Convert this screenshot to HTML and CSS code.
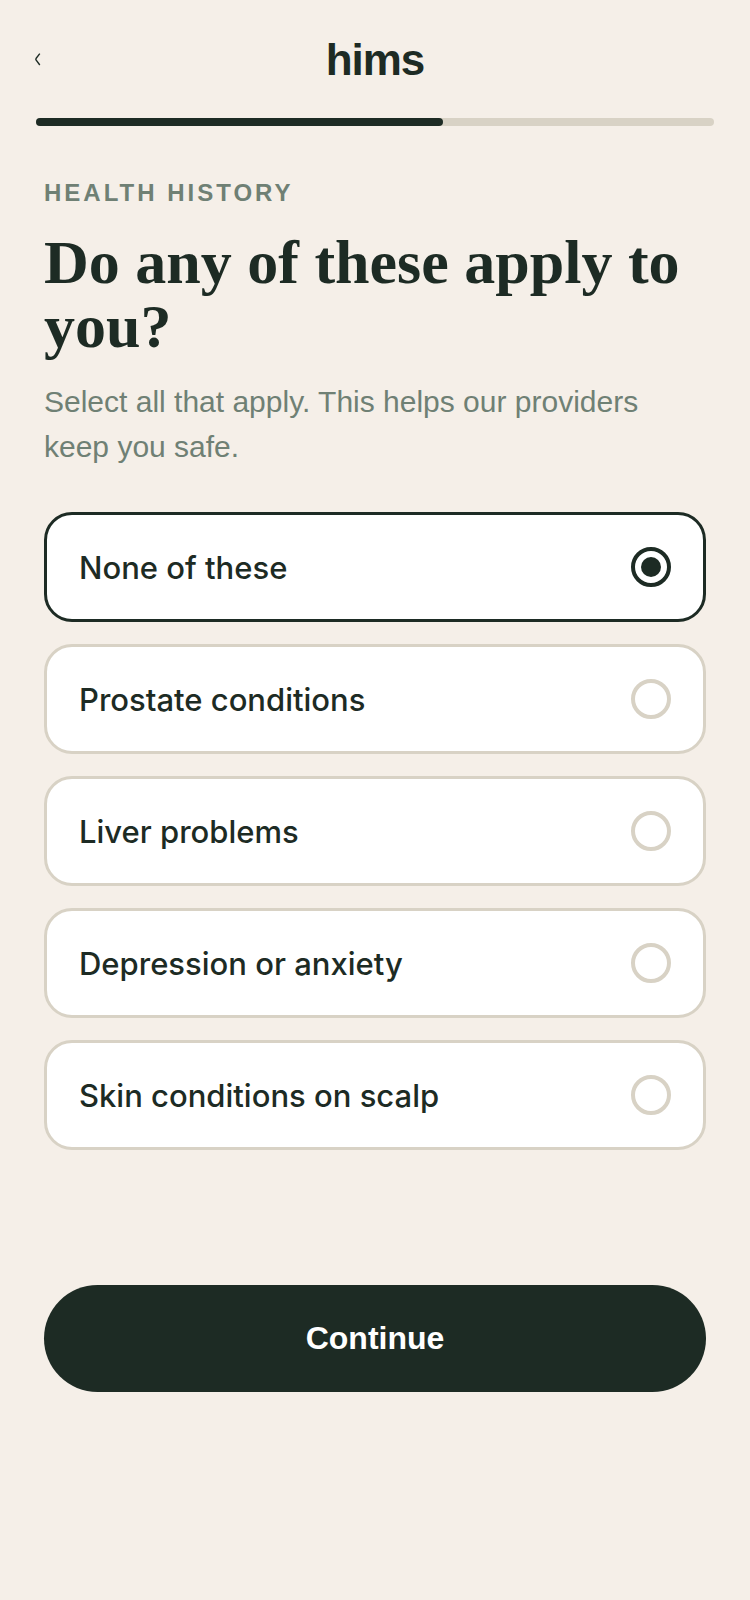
FILE: index.html
```html
<!DOCTYPE html>
<html lang="en">
<head>
    <meta charset="UTF-8">
    <meta name="viewport" content="width=device-width, initial-scale=1.0">
    <title>Health history</title>
    <link rel="stylesheet" href="styles.css">
</head>
<body>
    <header class="header">
        <button class="back" type="button" aria-label="Back">
            <svg viewBox="0 0 8 16" width="8" height="16" aria-hidden="true">
                <path d="M5.8 1.6L2.2 6.2Q1.4 7.2 2.2 8.2L5.8 13" fill="none" stroke="currentColor" stroke-width="1.4"/>
            </svg>
        </button>
        <div class="logo">hims</div>
    </header>
    <div class="progress">
        <div class="progress-fill" style="width: 60%"></div>
    </div>

    <main class="content">
        <p class="eyebrow">HEALTH HISTORY</p>
        <h1 class="title">Do any of these apply to you?</h1>
        <p class="subtitle">Select all that apply. This helps our providers keep you safe.</p>

        <form class="form">
            <div class="options">
                <label class="option">
                    <span>None of these</span>
                    <input class="radio" type="radio" name="condition" value="none" checked>
                </label>
                <label class="option">
                    <span>Prostate conditions</span>
                    <input class="radio" type="radio" name="condition" value="prostate">
                </label>
                <label class="option">
                    <span>Liver problems</span>
                    <input class="radio" type="radio" name="condition" value="liver">
                </label>
                <label class="option">
                    <span>Depression or anxiety</span>
                    <input class="radio" type="radio" name="condition" value="depression">
                </label>
                <label class="option">
                    <span>Skin conditions on scalp</span>
                    <input class="radio" type="radio" name="condition" value="scalp">
                </label>
            </div>
            <button class="continue" type="submit">Continue</button>
        </form>
    </main>
</body>
</html>
```
FILE: styles.css
```css
* {
    box-sizing: border-box;
}
body {
    margin: 0;
    background-color: #f5efe8;
    color: #1d2b24;
    font-family: "Liberation Sans", Arial, sans-serif;
}
.header {
    display: grid;
    grid-template-columns: 24px 1fr 24px;
    align-items: center;
    padding: 32px 32px 0;
}
.back {
    display: flex;
    padding: 2px;
    border: 0;
    background: none;
    color: inherit;
    cursor: pointer;
}
.logo {
    text-align: center;
    font-size: 44px;
    font-weight: bold;
    line-height: 56px;
    letter-spacing: -1px;
}
.progress {
    height: 8px;
    margin: 30px 36px 0;
    border-radius: 4px;
    background-color: #d8d2c5;
}
.progress-fill {
    height: 100%;
    border-radius: 4px;
    background-color: #1d2b24;
}
.content {
    padding: 53px 44px;
}
.eyebrow {
    margin: 0;
    color: #6f8074;
    font-size: 24px;
    font-weight: bold;
    line-height: 28px;
    letter-spacing: 3px;
}
.title {
    margin: 23px 0 0;
    font-family: "Liberation Serif", "Times New Roman", serif;
    font-size: 62px;
    font-weight: bold;
    line-height: 64px;
}
.subtitle {
    margin: 21px 0 0;
    color: #6f8074;
    font-size: 30px;
    line-height: 45px;
}
.options {
    display: grid;
    gap: 22px;
    margin-top: 43px;
}
.option {
    display: flex;
    align-items: center;
    justify-content: space-between;
    min-height: 110px;
    padding: 0 32px;
    border: 3px solid #d8d2c5;
    border-radius: 28px;
    background-color: #ffffff;
    font-family: Inter, "Liberation Sans", sans-serif;
    font-size: 31px;
    font-weight: 500;
    cursor: pointer;
}
.option:has(.radio:checked) {
    border-color: #1d2b24;
}
.radio {
    display: grid;
    place-items: center;
    appearance: none;
    width: 40px;
    height: 40px;
    margin: 0;
    border: 4px solid #d8d2c5;
    border-radius: 50%;
}
.radio:checked {
    border-color: #1d2b24;
}
.radio:checked::before {
    content: "";
    width: 20px;
    height: 20px;
    border-radius: 50%;
    background-color: #1d2b24;
}
.continue {
    width: 100%;
    min-height: 107px;
    margin-top: 135px;
    border: 0;
    border-radius: 54px;
    background-color: #1d2b24;
    color: #ffffff;
    font-family: inherit;
    font-size: 32px;
    font-weight: bold;
    cursor: pointer;
}
```
